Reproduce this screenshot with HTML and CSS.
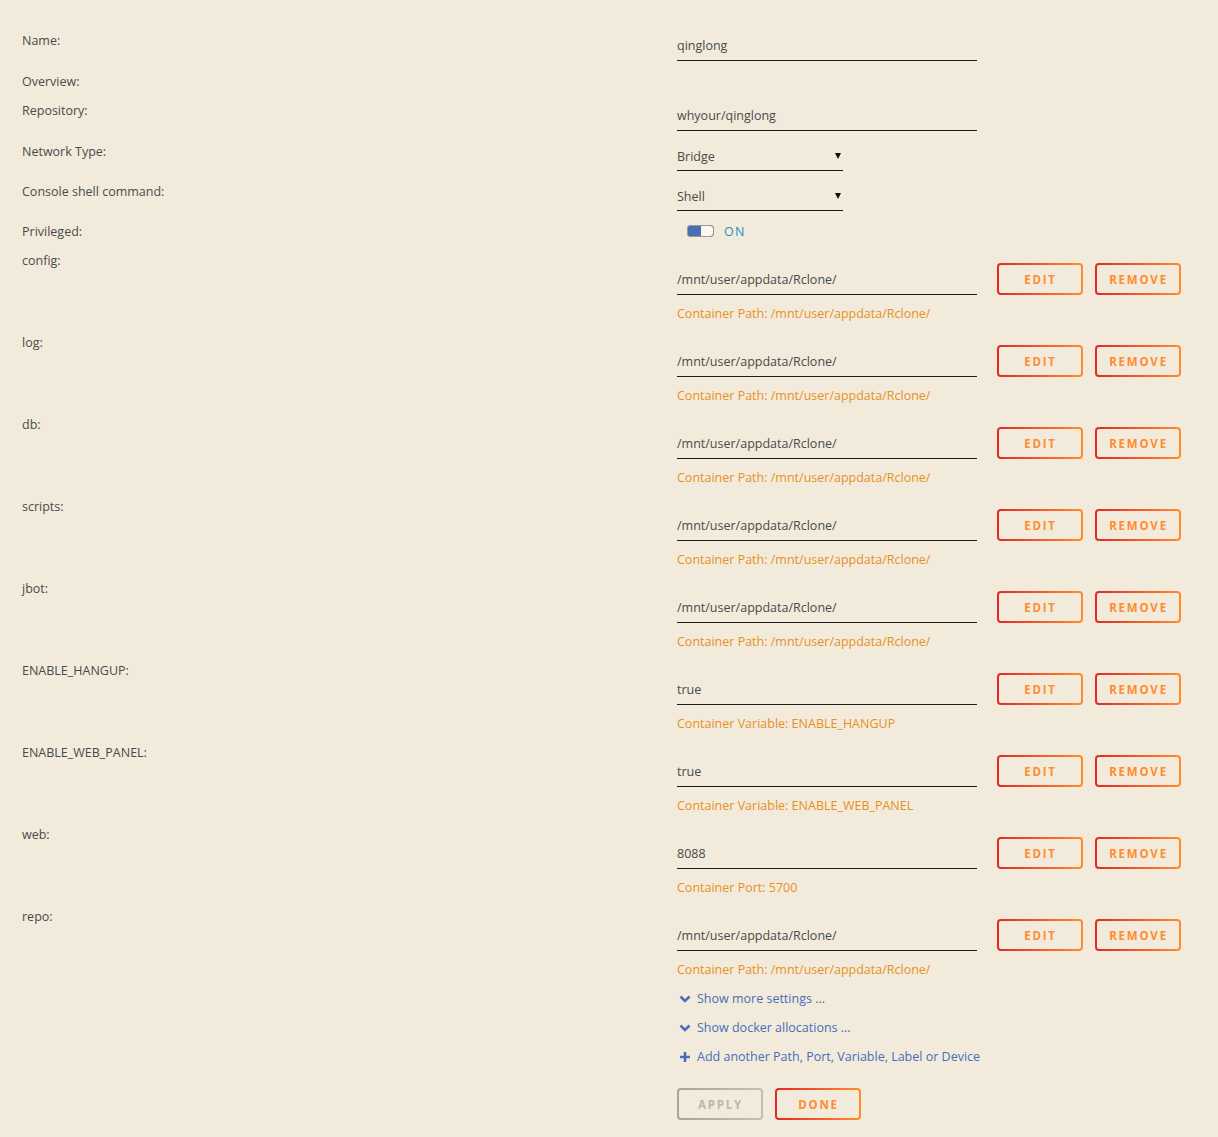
FILE: index.html
```html
<!DOCTYPE html>
<html>
<head>
<meta charset="utf-8">
<link rel="stylesheet" href="styles.css">
</head>
<body>
<form class="form">
  <div class="row row-basic">
    <div class="label">Name:</div>
    <div class="content"><input class="field wide" value="qinglong"></div>
  </div>
  <div class="row row-plain">
    <div class="label">Overview:</div>
    <div class="content"></div>
  </div>
  <div class="row row-basic">
    <div class="label">Repository:</div>
    <div class="content"><input class="field wide" value="whyour/qinglong"></div>
  </div>
  <div class="row row-select">
    <div class="label">Network Type:</div>
    <div class="content"><div class="select">Bridge<span class="caret"></span></div></div>
  </div>
  <div class="row row-select">
    <div class="label">Console shell command:</div>
    <div class="content"><div class="select">Shell<span class="caret"></span></div></div>
  </div>
  <div class="row row-plain">
    <div class="label">Privileged:</div>
    <div class="content"><div class="toggle"><span class="switch"><span class="knob"></span></span><span class="on">ON</span></div></div>
  </div>

  <div class="row row-cfg">
    <div class="label">config:</div>
    <div class="content">
      <div class="line"><input class="field wide" value="/mnt/user/appdata/Rclone/"><button type="button" class="btn">EDIT</button><button type="button" class="btn">REMOVE</button></div>
      <div class="hint">Container Path: /mnt/user/appdata/Rclone/</div>
    </div>
  </div>
  <div class="row row-cfg">
    <div class="label">log:</div>
    <div class="content">
      <div class="line"><input class="field wide" value="/mnt/user/appdata/Rclone/"><button type="button" class="btn">EDIT</button><button type="button" class="btn">REMOVE</button></div>
      <div class="hint">Container Path: /mnt/user/appdata/Rclone/</div>
    </div>
  </div>
  <div class="row row-cfg">
    <div class="label">db:</div>
    <div class="content">
      <div class="line"><input class="field wide" value="/mnt/user/appdata/Rclone/"><button type="button" class="btn">EDIT</button><button type="button" class="btn">REMOVE</button></div>
      <div class="hint">Container Path: /mnt/user/appdata/Rclone/</div>
    </div>
  </div>
  <div class="row row-cfg">
    <div class="label">scripts:</div>
    <div class="content">
      <div class="line"><input class="field wide" value="/mnt/user/appdata/Rclone/"><button type="button" class="btn">EDIT</button><button type="button" class="btn">REMOVE</button></div>
      <div class="hint">Container Path: /mnt/user/appdata/Rclone/</div>
    </div>
  </div>
  <div class="row row-cfg">
    <div class="label">jbot:</div>
    <div class="content">
      <div class="line"><input class="field wide" value="/mnt/user/appdata/Rclone/"><button type="button" class="btn">EDIT</button><button type="button" class="btn">REMOVE</button></div>
      <div class="hint">Container Path: /mnt/user/appdata/Rclone/</div>
    </div>
  </div>
  <div class="row row-cfg">
    <div class="label">ENABLE_HANGUP:</div>
    <div class="content">
      <div class="line"><input class="field wide" value="true"><button type="button" class="btn">EDIT</button><button type="button" class="btn">REMOVE</button></div>
      <div class="hint">Container Variable: ENABLE_HANGUP</div>
    </div>
  </div>
  <div class="row row-cfg">
    <div class="label">ENABLE_WEB_PANEL:</div>
    <div class="content">
      <div class="line"><input class="field wide" value="true"><button type="button" class="btn">EDIT</button><button type="button" class="btn">REMOVE</button></div>
      <div class="hint">Container Variable: ENABLE_WEB_PANEL</div>
    </div>
  </div>
  <div class="row row-cfg">
    <div class="label">web:</div>
    <div class="content">
      <div class="line"><input class="field wide" value="8088"><button type="button" class="btn">EDIT</button><button type="button" class="btn">REMOVE</button></div>
      <div class="hint">Container Port: 5700</div>
    </div>
  </div>
  <div class="row row-cfg">
    <div class="label">repo:</div>
    <div class="content">
      <div class="line"><input class="field wide" value="/mnt/user/appdata/Rclone/"><button type="button" class="btn">EDIT</button><button type="button" class="btn">REMOVE</button></div>
      <div class="hint">Container Path: /mnt/user/appdata/Rclone/</div>
    </div>
  </div>

  <div class="row">
    <div class="label"></div>
    <div class="content links">
      <a class="link"><svg class="ico" viewBox="0 0 12 12"><path d="M1.5 3.5 L6 8 L10.5 3.5" fill="none" stroke="currentColor" stroke-width="2.6"/></svg>Show more settings ...</a>
      <a class="link"><svg class="ico" viewBox="0 0 12 12"><path d="M1.5 3.5 L6 8 L10.5 3.5" fill="none" stroke="currentColor" stroke-width="2.6"/></svg>Show docker allocations ...</a>
      <a class="link"><svg class="ico" viewBox="0 0 12 12"><path d="M6 1 V11 M1 6 H11" fill="none" stroke="currentColor" stroke-width="2.6"/></svg>Add another Path, Port, Variable, Label or Device</a>
      <div class="actions"><button type="button" class="btn disabled">APPLY</button><button type="button" class="btn">DONE</button></div>
    </div>
  </div>
</form>
</body>
</html>
```
FILE: styles.css
```css
html, body {
  margin: 0;
  padding: 0;
  background: #f2ebdc;
}
body {
  font-family: "Open Sans", "Noto Sans", sans-serif;
  font-size: 12.5px;
  color: #4a4a4a;
}
.form {
  padding: 30px 22px 20px 22px;
}
.row {
  display: flex;
  align-items: flex-start;
}
.label {
  width: 655px;
  flex: none;
  line-height: 20px;
  padding-top: 1px;
}
.content {
  flex: 1;
}
.row-basic { height: 41px; }
.row-basic .content { padding-top: 5px; }
.row-select { height: 40px; }
.row-select .content { padding-top: 5px; }
.row-plain { height: 29px; }
.row-cfg { height: 82px; }
.row-cfg .content { padding-top: 13px; }

.field {
  font: inherit;
  color: #4a4a4a;
  background: transparent;
  border: none;
  border-bottom: 1px solid #1c1c1c;
  outline: none;
  padding: 0 0 5px 0;
  margin: 0;
  height: 26px;
  line-height: 20px;
  box-sizing: border-box;
  display: block;
}
.wide { width: 300px; }

.select {
  width: 166px;
  height: 25px;
  box-sizing: border-box;
  line-height: 21px;
  border-bottom: 1px solid #1c1c1c;
  padding-bottom: 3px;
  display: flex;
  justify-content: space-between;
  align-items: center;
}
.caret {
  width: 0;
  height: 0;
  border-left: 3px solid transparent;
  border-right: 3px solid transparent;
  border-top: 6px solid #111;
  margin-right: 2px;
  margin-top: -1px;
}

.toggle {
  display: flex;
  align-items: center;
  padding-left: 10px;
  height: 20px;
}
.switch {
  width: 27px;
  height: 12px;
  border-radius: 3px;
  box-sizing: border-box;
  border: 1px solid #9a9a9a;
  background: #4a6eb0;
  position: relative;
  display: block;
}
.knob {
  position: absolute;
  right: 0;
  top: 0;
  width: 12px;
  height: 10px;
  background: #fbf8ee;
  border-radius: 0 3px 3px 0;
}
.on {
  margin-left: 10px;
  color: #1f8ec9;
  letter-spacing: 1.2px;
  font-weight: 400;
}

.line {
  display: flex;
  align-items: flex-end;
}
.btn {
  font-family: "Open Sans", "Noto Sans", sans-serif;
  font-size: 11.5px;
  font-weight: 700;
  letter-spacing: 1.8px;
  color: #ff8c2f;
  width: 86px;
  height: 32px;
  box-sizing: border-box;
  border: 2px solid transparent;
  border-radius: 4px;
  background: linear-gradient(#f2ebdc, #f2ebdc) padding-box, linear-gradient(90deg, #e22828, #ff8c2f) border-box;
  padding: 0 0 0 1px;
  margin: 0 0 0 12px;
  cursor: pointer;
}
.line .btn:first-of-type { margin-left: 20px; }
.hint {
  margin-top: 9px;
  line-height: 20px;
  color: #e8901e;
}

.links {
  display: flex;
  flex-direction: column;
  align-items: flex-start;
  padding-top: 1px;
}
.link {
  display: flex;
  align-items: center;
  line-height: 20px;
  color: #486dba;
  margin-bottom: 9px;
}
.ico {
  width: 12px;
  height: 12px;
  margin: 0 6px 0 2px;
  color: #486dba;
}
.actions {
  display: flex;
  margin-top: 12px;
}
.actions .btn:first-child { margin-left: 0; }
.btn.disabled {
  color: #bdb7a7;
  background: linear-gradient(#f2ebdc, #f2ebdc) padding-box, linear-gradient(90deg, #a8a596, #c4c0b0) border-box;
  cursor: default;
}
```
